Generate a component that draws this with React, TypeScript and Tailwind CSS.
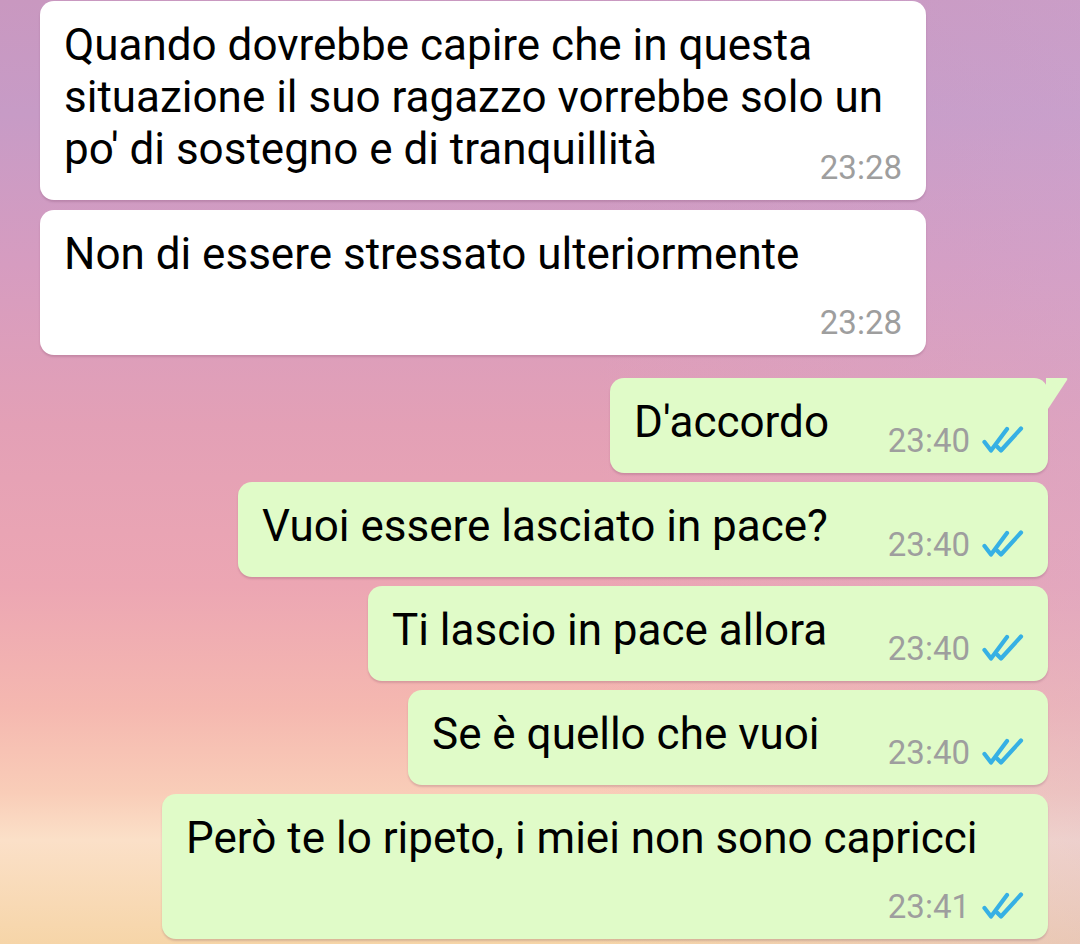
import type { ReactNode } from "react";

// doppia spunta blu (messaggio letto)
function Ticks() {
  return (
    <svg width="42" height="28" viewBox="0 0 42 28" className="mb-[3px] ml-[12px] shrink-0">
      <path d="M2.5 16 L9 24.5 L25 3" fill="none" stroke="#36b0e4" strokeWidth="4.2" strokeLinecap="round" strokeLinejoin="round" />
      <path d="M15 20.5 L19 24.5 L39 2.5" fill="none" stroke="#36b0e4" strokeWidth="4.2" strokeLinecap="round" strokeLinejoin="round" />
    </svg>
  );
}

function Time({ value, read }: { value: string; read?: boolean }) {
  return (
    <div className="flex items-end shrink-0">
      <span className="text-[33px] leading-[32px] text-[#9e9e9e]">{value}</span>
      {read && <Ticks />}
    </div>
  );
}

interface BubbleProps {
  children: ReactNode;
  time: string;
  out?: boolean;
  layout?: "inline" | "below" | "wrap";
  tail?: boolean;
  width: string;
}

function Bubble({ children, time, out, layout = "inline", tail, width }: BubbleProps) {
  const base = out ? "bg-[#e0fbc8] self-end" : "bg-white self-start";
  return (
    <div className={`relative rounded-[14px] shadow-[0_2px_2px_rgba(90,40,70,0.18)] pt-[18px] pb-[16px] pl-[24px] pr-[24px] ${base} ${width}`}>
      {tail && (
        <svg width="22" height="34" viewBox="0 0 22 34" className="absolute top-0 right-[-20px]">
          <path d="M0 0 L20 0 Q22 0 21 2 L0 34 Z" fill="#e0fbc8" />
        </svg>
      )}
      {layout === "below" && (
        <div className="flex flex-col">
          <div className="text-[44px] leading-[52px] text-black whitespace-nowrap">{children}</div>
          <div className="mt-[27px] self-end">
            <Time value={time} read={out} />
          </div>
        </div>
      )}
      {layout === "wrap" && (
        <div className="flex flex-col">
          <div className="text-[44px] leading-[52px] text-black whitespace-nowrap">{children}</div>
          <div className="mt-[-23px] self-end">
            <Time value={time} read={out} />
          </div>
        </div>
      )}
      {layout === "inline" && (
        <div className="flex items-end justify-between">
          <div className="text-[44px] leading-[52px] text-black mb-[9px] whitespace-nowrap">{children}</div>
          <Time value={time} read={out} />
        </div>
      )}
    </div>
  );
}

export default function App() {
  return (
    <div
      className="w-[1080px] h-[944px] overflow-hidden bg-[linear-gradient(90deg,rgba(205,170,215,0)_55%,rgba(205,170,215,0.3)_100%),linear-gradient(180deg,#c998c0_0%,#c79bc6_12%,#d69cc0_28%,#e3a0b6_45%,#eca6b3_62%,#f5b8b0_75%,#f9cdb8_84%,#fbe0c8_89%,#f6d5a8_100%)]"
      style={{ fontFamily: "Roboto, 'Noto Sans', sans-serif" }}
    >
      <div className="flex flex-col pt-[1px] pl-[40px] pr-[32px]">
        <Bubble time="23:28" layout="wrap" width="w-[886px]">
          Quando dovrebbe capire che in questa
          <br />
          situazione il suo ragazzo vorrebbe solo un
          <br />
          po' di sostegno e di tranquillità
        </Bubble>
        <div className="mt-[10px]" />
        <Bubble time="23:28" layout="below" width="w-[886px]">
          Non di essere stressato ulteriormente
        </Bubble>

        <div className="mt-[23px] flex flex-col gap-[9px]">
          <Bubble time="23:40" out tail width="w-[438px]">
            D'accordo
          </Bubble>
          <Bubble time="23:40" out width="w-[810px]">
            Vuoi essere lasciato in pace?
          </Bubble>
          <Bubble time="23:40" out width="w-[680px]">
            Ti lascio in pace allora
          </Bubble>
          <Bubble time="23:40" out width="w-[640px]">
            Se è quello che vuoi
          </Bubble>
          <Bubble time="23:41" out layout="below" width="w-[886px]">
            Però te lo ripeto, i miei non sono capricci
          </Bubble>
        </div>
      </div>
    </div>
  );
}
